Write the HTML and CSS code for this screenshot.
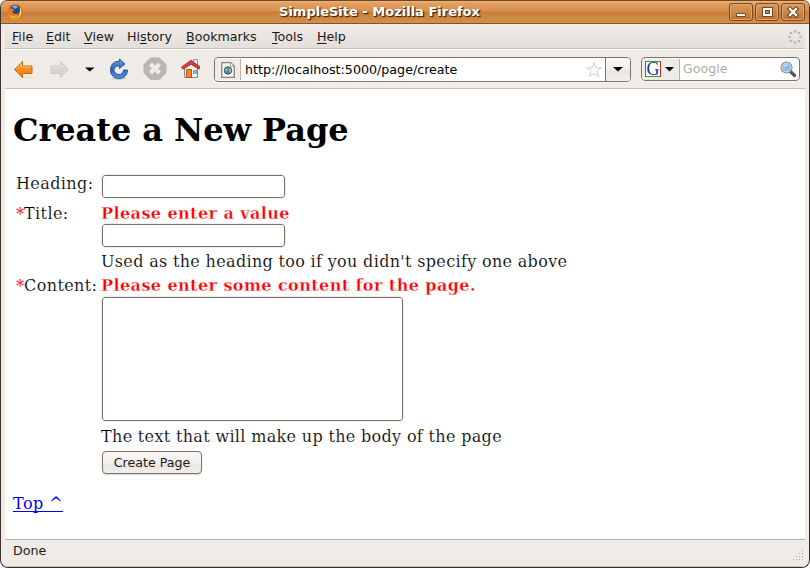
FILE: index.html
```html
<!DOCTYPE html>
<html lang="en">
<head>
<meta charset="utf-8">
<title>SimpleSite - Mozilla Firefox</title>
<link rel="stylesheet" href="styles.css">
</head>
<body>
<div class="window">
  <header class="titlebar">
    <svg class="logo" width="16" height="16" viewBox="0 0 16 16"><defs><radialGradient id="fire" cx=".35" cy=".8" r=".9"><stop offset="0" stop-color="#ffb52a"/><stop offset=".5" stop-color="#e66e16"/><stop offset="1" stop-color="#a92d0a"/></radialGradient></defs><circle cx="8" cy="8" r="7.500" fill="url(#fire)"/><path d="M13 3c4 6 0 11.500-5 11.500 3-.5 5-3 4.500-6z" fill="#ffd84a"/><circle cx="8.200" cy="6.300" r="4.800" fill="#204a91"/><path d="M5 2.500c2-1.500 5-1 6 .5L8 5z" fill="#6fb7e8"/><path d="M1.200 4l2 .5 3 .5 1 1.500-2 1 1 2 3 .5 2-1c-1 3-5 4-8 2C1 9.500.5 6.500 1.200 4z" fill="#e97918"/></svg>
    <h2 class="caption">SimpleSite - Mozilla Firefox</h2>
    <div class="controls">
      <span class="ctl"><svg width="22" height="16" viewBox="0 0 22 16"><path d="M6.500 9.500h9v3h-9z" fill="#fff" stroke="#7b481d"/></svg></span>
      <span class="ctl"><svg width="22" height="16" viewBox="0 0 22 16"><path d="M8 5h7v6H8z" fill="none" stroke="#7b481d" stroke-width="4"/><path d="M8 5h7v6H8z" fill="none" stroke="#fff" stroke-width="2"/></svg></span>
      <span class="ctl"><svg width="22" height="16" viewBox="0 0 22 16"><path d="M8 5l6 6m0-6l-6 6" stroke="#7b481d" stroke-width="4.500" stroke-linecap="square"/><path d="M8 5l6 6m0-6l-6 6" stroke="#fff" stroke-width="2.300" stroke-linecap="square"/></svg></span>
    </div>
  </header>
  <div class="chrome">
    <nav class="menubar">
      <span class="menu m-file"><u>F</u>ile</span><span class="menu m-edit"><u>E</u>dit</span><span class="menu m-view"><u>V</u>iew</span><span class="menu m-hist">Hi<u>s</u>tory</span><span class="menu m-book"><u>B</u>ookmarks</span><span class="menu m-tools"><u>T</u>ools</span><span class="menu"><u>H</u>elp</span>
      <svg class="throbber" width="14" height="14" viewBox="0 0 14 14" fill="#b9b5b0"><circle cx="7" cy="1.500" r="1.300"/><circle cx="11" cy="3" r="1.300"/><circle cx="12.500" cy="7" r="1.300"/><circle cx="11" cy="11" r="1.300"/><circle cx="7" cy="12.500" r="1.300"/><circle cx="3" cy="11" r="1.300"/><circle cx="1.500" cy="7" r="1.300"/><circle cx="3" cy="3" r="1.300"/></svg>
    </nav>
    <div class="toolbar">
      <svg class="buttons" width="200" height="38" viewBox="0 50 200 38">
        <defs>
          <linearGradient id="org" x2="0" y2="1"><stop offset="0" stop-color="#ffb45b"/><stop offset=".5" stop-color="#f98c18"/><stop offset="1" stop-color="#f47900"/></linearGradient>
          <linearGradient id="blu" x2="0" y2="1"><stop offset="0" stop-color="#6aa2de"/><stop offset=".5" stop-color="#2c68bd"/><stop offset="1" stop-color="#4b91ea"/></linearGradient>
        </defs>
        <ellipse cx="25" cy="77.500" rx="8" ry="1" fill="#e0dcd7"/>
        <path d="M14.500 69.500l8-8v4.500h9.500v7.500h-9.500v4z" fill="url(#org)" stroke="#c46a13"/>
        <path d="M16.500 69l5-5v3h9.500" fill="none" stroke="#ffd09a" stroke-opacity=".7"/>
        <path d="M68.500 69.500l-8-8v4.500H51v7.500h9.500v4z" fill="#d8d4cf" stroke="#ccc8c3"/>
        <path d="M52 67h9.500v-3l5 5" fill="none" stroke="#e6e3df"/>
        <path d="M85 67.500h9.500l-4.750 4z" fill="#000"/>
        <ellipse cx="119" cy="78.500" rx="8" ry="1.500" fill="#d2cfcb"/>
        <path d="M117 61.500h2.500V59l5.500 5-5.500 4.500V66h-1c-3 0-4.500 2-4.500 4 0 2.500 2.300 4.500 5 4.500 2.500 0 4.200-1.700 4.500-4.500h4c0 5-3.500 8.500-8.500 8.500s-8.500-3.500-8.500-8.500c0-4.500 3-8.500 6.500-8.500z" fill="url(#blu)" stroke="#204f94" stroke-width=".9"/>
        <path d="M150.500 57.500h9l7 7v8.500l-7 7h-9l-7-7v-8.500z" fill="#bdb5b2"/>
        <path d="M150.500 64l9 9m0-9l-9 9" stroke="#efedea" stroke-width="4"/>
        <path d="M193.500 59.500h4v6h-4z" fill="#eee" stroke="#999"/>
        <path d="M184.500 67.500l6.500-4 6.500 4v10h-13z" fill="#f1efec" stroke="#888"/>
        <path d="M186.500 69.500h5v8h-5z" fill="#f48a1d" stroke="#a35a16"/>
        <path d="M193.500 70.500h3v3h-3z" fill="#55d0e4" stroke="#6a8a90" stroke-width=".7"/>
        <path d="M181.500 67l9.500-6.700 9.500 6.700-.8 1.800h-1.700l-7-4.600-7 4.600h-1.700z" fill="#d23c3c" stroke="#a22b2b" stroke-width=".8"/>
      </svg>
      <div class="urlbar">
        <span class="site"><svg width="14" height="16" viewBox="0 0 14 16"><path d="M.7.700h9l3.600 3.600v11H.700z" fill="#f5f5f3" stroke="#858783" stroke-width="1.300"/><path d="M9.500 1v3.500H13" fill="#fff" stroke="#aaa"/><circle cx="7" cy="8.500" r="3.800" fill="#4e78a8" stroke="#2c548f" stroke-width=".8"/><path d="M4 7.500c2-3 3-1 3 0s-2 2-2 3zM8 6l2 1v3l-2 1z" fill="#9dc15b"/></svg></span>
        <span class="url">http://localhost:5000/page/create</span>
        <svg class="star" width="16" height="16" viewBox="0 0 16 16"><path d="M8 .8l2 5h5.300L11 9l1.700 5.600L8 11.500l-4.700 3.100L5 9 .7 5.800H6z" fill="#fff" stroke="#cfcfcf" stroke-linejoin="round"/></svg>
        <span class="drop"><svg width="10" height="5"><path d="M0 0h10L5 4.500z"/></svg></span>
      </div>
      <div class="search">
        <span class="engine"><span class="g">G</span><svg width="9" height="5"><path d="M0 0h9L4.500 4.500z"/></svg></span>
        <span class="hint">Google</span>
        <svg class="lens" width="17" height="17" viewBox="0 0 17 17"><path d="M10 10l4.500 4.500" stroke="#555" stroke-width="3.200" stroke-linecap="round"/><circle cx="6.500" cy="6.500" r="5.300" fill="#8bbcf0" stroke="#888" stroke-width="1.500"/><circle cx="6.500" cy="6.500" r="4.500" fill="none" stroke="#dceafb"/><path d="M4 6c0-2 2-3 4-2-2 0-3 1-4 2z" fill="#fff"/></svg>
      </div>
    </div>
    <main class="page">
      <h1>Create a New Page</h1>
      <form class="form">
        <label class="label l-head" for="heading"><span>Heading:</span></label>
        <div class="field"><input id="heading" class="input"></div>
        <label class="label" for="title"><b>*</b><span>Title:</span></label>
        <div class="field"><span class="error">Please enter a value</span><input id="title" class="input below"><span class="help">Used as the heading too if you didn't specify one above</span></div>
        <label class="label" for="content"><b>*</b><span>Content:</span></label>
        <div class="field"><span class="error">Please enter some content for the page.</span><textarea id="content" class="input area"></textarea><span class="help last">The text that will make up the body of the page</span><button class="submit" type="button">Create Page</button></div>
      </form>
      <a class="top" href="#">Top ^</a>
    </main>
    <footer class="status"><span>Done</span>
      <svg class="grip" width="11" height="11" viewBox="0 0 11 11" fill="#aaa69f"><path d="M9 0h1v1H9zM6 3h1v1H6zM9 3h1v1H9zM3 6h1v1H3zM6 6h1v1H6zM9 6h1v1H9zM0 9h1v1H0zM3 9h1v1H3zM6 9h1v1H6zM9 9h1v1H9z"/></svg>
    </footer>
  </div>
</div>
</body>
</html>
```
FILE: styles.css
```css
* { box-sizing: border-box; }
html, body { margin: 0; background: #fff; }
body { width: 810px; height: 568px; overflow: hidden; font: 12.67px/16px "DejaVu Sans", sans-serif; color: #1a1a1a; }
svg { display: block; flex: none; }
.window { height: 568px; display: flex; flex-direction: column; border: 1px solid #3b302b; border-top-color: #70451f; border-radius: 7px 7px 8px 8px; overflow: hidden; background: #efebe7; }
.titlebar { height: 23px; flex: none; display: flex; align-items: center; padding: 0 4px 0 6px; border-bottom: 1px solid #865223; background: linear-gradient(#f0b67e 0, #e1a063 2px, #d88f4c 10px, #c67e38 11px, #d68f49 22px); }
.caption { flex: 1; margin: 0 0 0 7px; text-align: center; font-size: 13px; line-height: 22px; color: #fff; text-shadow: 1px 1px 1px #4a2b10, 1px 1px 1px #4a2b10; }
.controls { display: flex; gap: 2px; }
.ctl { width: 24px; height: 18px; border: 1px solid #7b481d; border-radius: 3px; box-shadow: inset 0 0 0 1px #dfa671; background: linear-gradient(#dc9a5c, #b97432); }
.chrome { flex: 1; display: flex; flex-direction: column; padding: 0 4px 0 4px; border-bottom: 1px solid #c9bfb6; }
.menubar { height: 25px; flex: none; display: flex; align-items: center; padding: 1px 0 0 7px; background: linear-gradient(#efebe7, #e4dfd9); border-bottom: 1px solid #cbbfb1; }
.menu { white-space: nowrap; }
.menu u { text-underline-offset: 2px; text-decoration-thickness: 1px; }
.m-file { width: 34px; } .m-edit { width: 38px; } .m-view { width: 43px; } .m-hist { width: 59px; } .m-book { width: 86px; } .m-tools { width: 45px; }
.throbber { margin: 0 3px 0 auto; }
.toolbar { height: 40px; flex: none; display: flex; padding-right: 5px; border-top: 1px solid #fff; border-bottom: 1px solid #cbbdb0; }
.buttons { width: 200px; margin: 0 14px 0 -5px; }
.urlbar, .search { height: 25px; margin-top: 7px; display: flex; align-items: center; border: 1px solid #7d7368; border-radius: 4px; background: #fff; overflow: hidden; color: #000; box-shadow: 0 1px #f8f6f4; }
.urlbar { width: 417px; }
.site { width: 26px; height: 21px; display: flex; align-items: center; justify-content: center; border-right: 1px solid #b9afa5; background: #efebe7; flex: none; }
.url { flex: 1; margin-left: 4px; white-space: nowrap; }
.star { margin-right: 3px; }
.drop { width: 25px; height: 23px; display: flex; align-items: center; justify-content: center; border-left: 1px solid #7d7368; background: linear-gradient(#faf8f7, #f3f1ef 11px, #e9e5e1 12px, #f1eeec); }
.search { width: 159px; margin-left: 10px; height: 24px; }
.engine { width: 38px; height: 21px; display: flex; align-items: center; gap: 4px; padding-left: 3px; border-right: 1px solid #b9afa5; background: #efebe7; flex: none; }
.g { width: 16px; height: 16px; border: 1px solid #2ba52b; border-right-color: #d22; border-left-color: #36c; background: #fff; color: #173399; font: 18px/14px "Liberation Serif", serif; display: flex; justify-content: center; }
.hint { flex: 1; margin-left: 3px; color: #b5aaa0; }
.lens { margin-right: 2px; }
.page { height: 450px; flex: none; padding: 0 8px; background: #fff; color: #000; font: 16px/19px "DejaVu Serif", serif; letter-spacing: .33px; overflow: hidden; }
h1 { margin: 21px 0 25px; font-size: 32px; line-height: 40px; letter-spacing: -.06px; white-space: nowrap; }
.form { display: grid; grid-template-columns: 85px 1fr; margin-left: 3px; }
.label { display: flex; white-space: nowrap; letter-spacing: .4px; }
.label b { width: 8px; color: red; -webkit-text-stroke: .2px #fff; }
.l-head { height: 29px; margin-top: -1px; margin-bottom: 1px; }
.label span, .help { -webkit-text-stroke: .15px #fff; }
.field { display: flex; flex-direction: column; align-items: flex-start; }
.input { display: block; width: 183px; height: 23px; margin: 0 0 0 1px; padding: 2px; border: 1px solid #7d6f64; border-radius: 3px; background: #fff; outline: 1px solid #f0edea; resize: none; }
.below { margin-top: 1px; }
.error, .help { white-space: nowrap; line-height: 19px; }
.error { color: red; font-weight: 700; letter-spacing: .43px; -webkit-text-stroke: .3px #fff; }
.help { margin-top: 5px; margin-bottom: 5px; }
.last { margin-top: 6px; }
.area { width: 301px; height: 124px; margin-top: 2px; }
.submit { width: 100px; height: 23px; margin: 0 0 1px 1px; padding: 0; border: 1px solid #7d7368; border-radius: 4px; background: linear-gradient(#f9f7f5, #f2efec 11px, #e9e5e1 12px, #f1eeeb); box-shadow: 0 1px 1px #d9d4cf; color: #1a1a1a; font: 12.67px/20px "DejaVu Sans", sans-serif; }
.top { display: inline-block; margin-top: 19px; color: #00e; letter-spacing: .45px; text-underline-offset: 2px; text-decoration-thickness: 1px; text-decoration-skip-ink: none; }
.status { flex: 1; display: flex; padding: 3px 0 0 8px; border-top: 1px solid #b6b0ab; background: #efebe7; }
.grip { margin: 7px 1px 0 auto; }
```
